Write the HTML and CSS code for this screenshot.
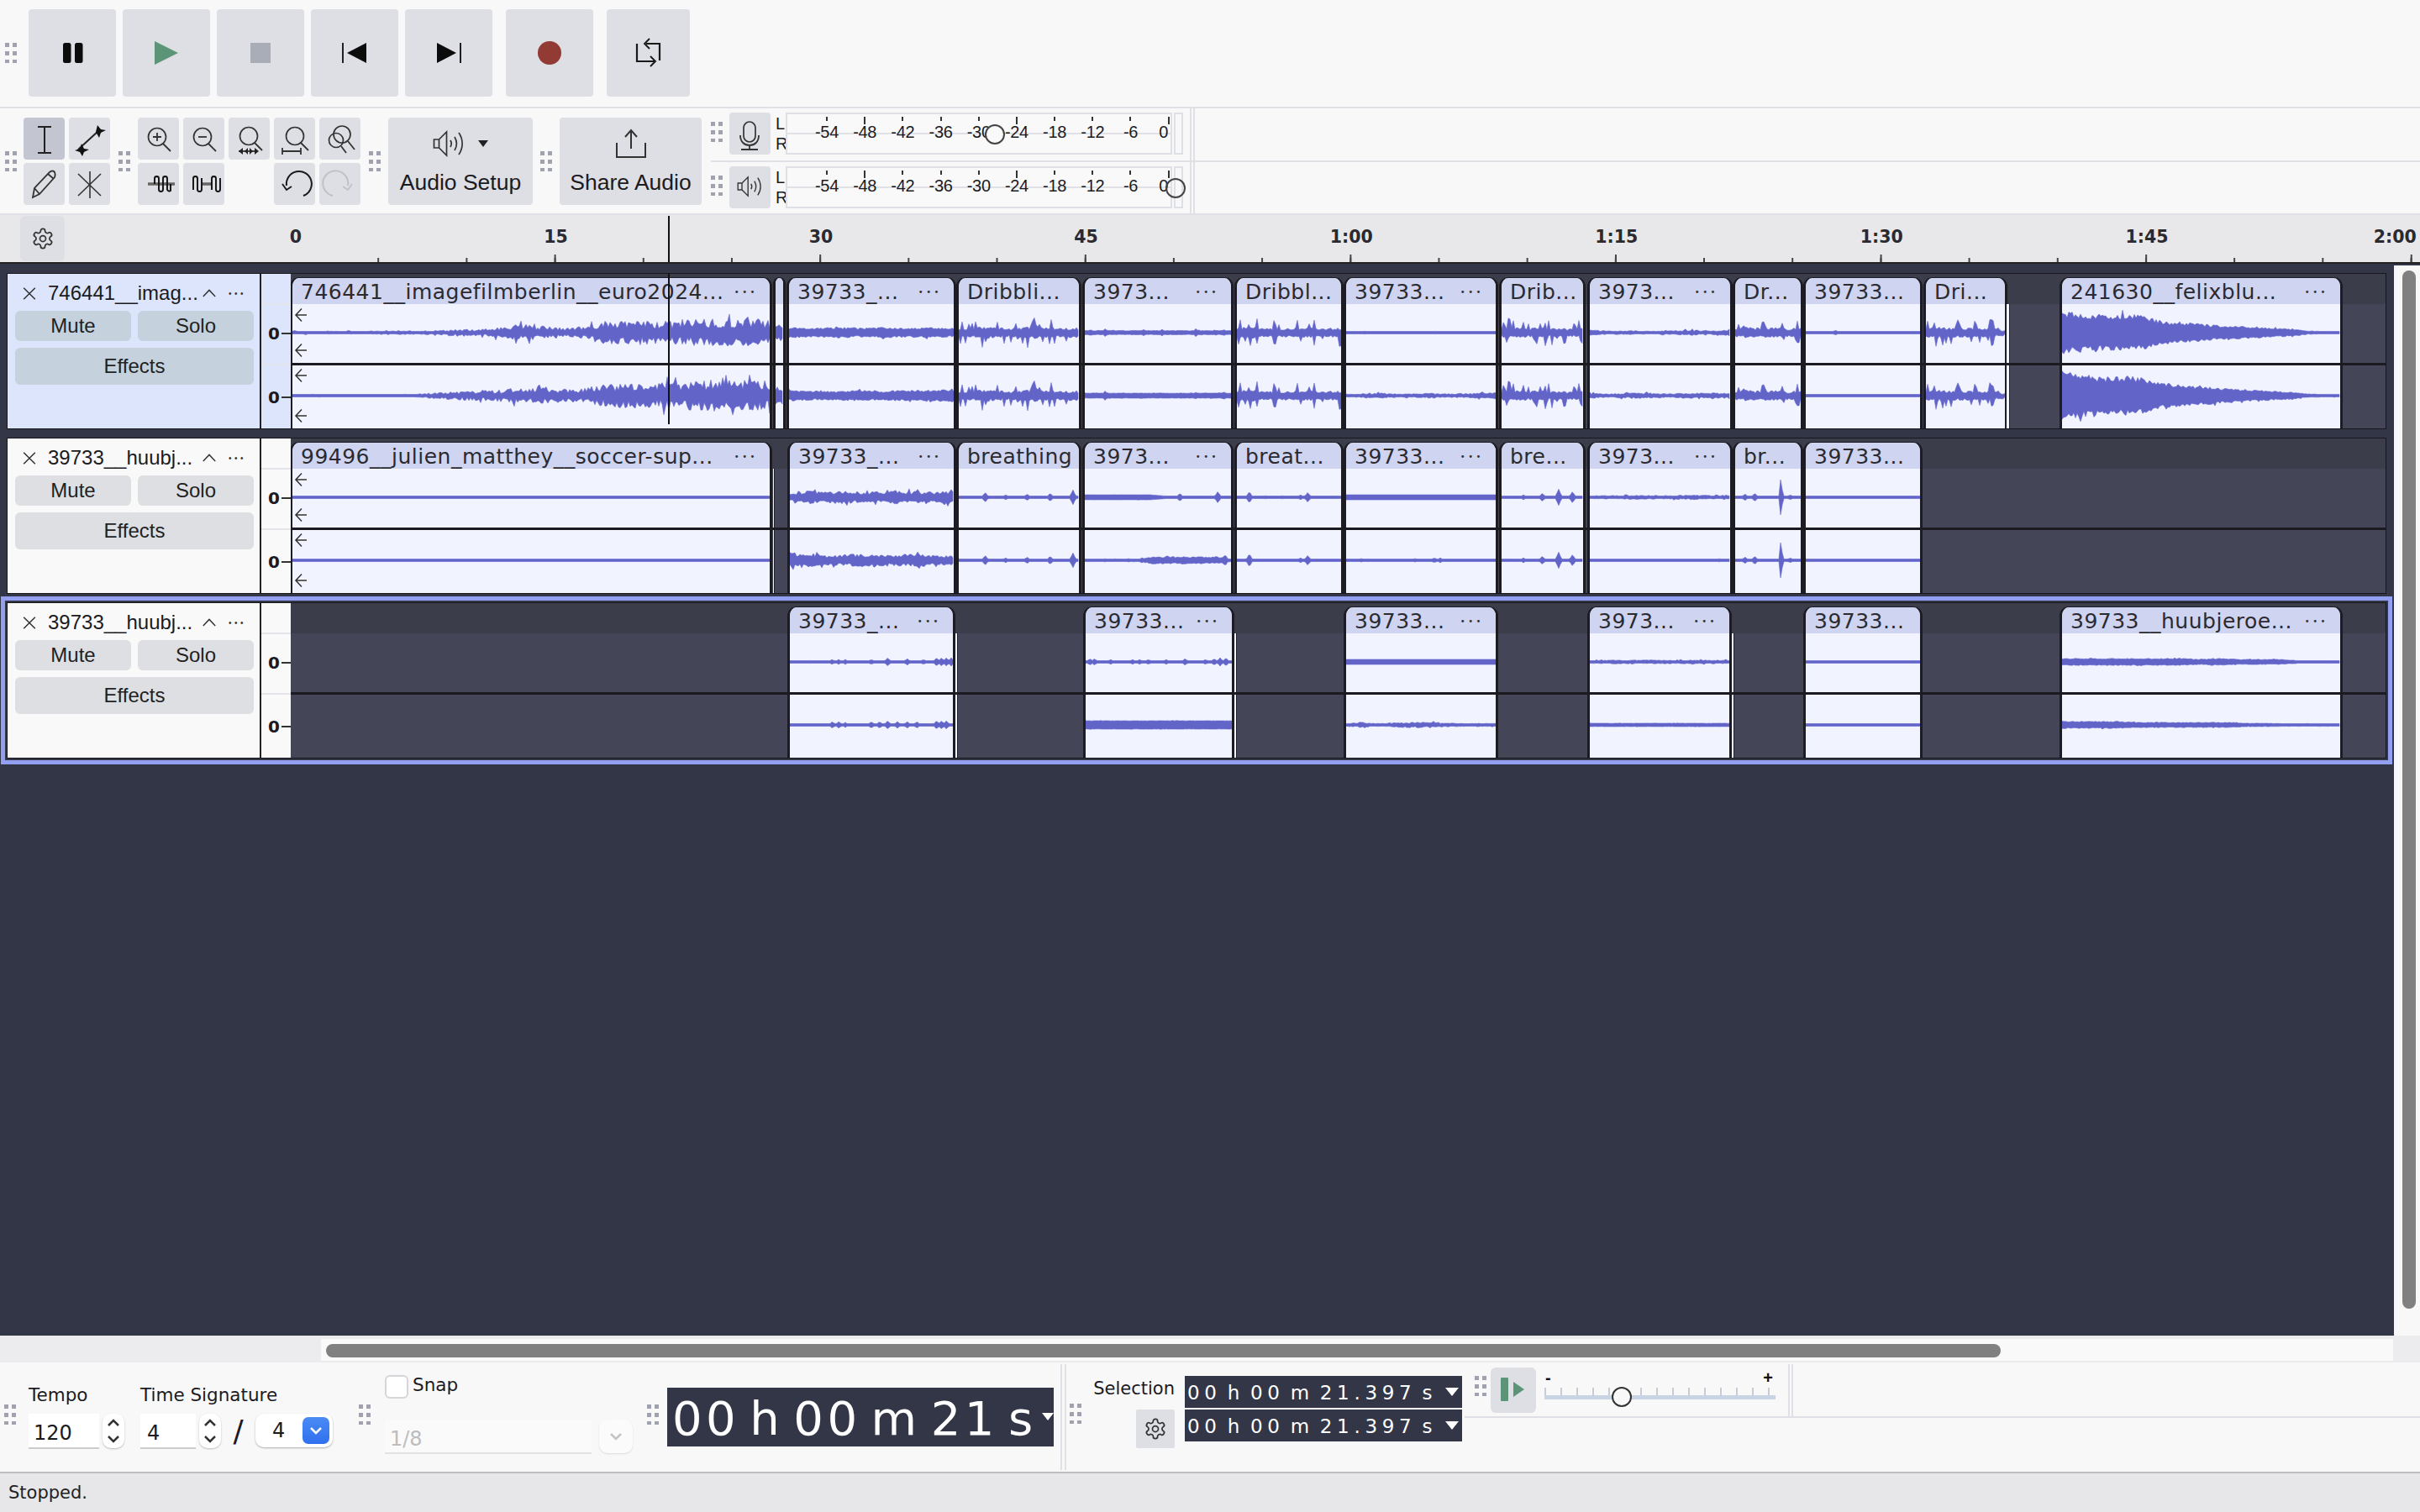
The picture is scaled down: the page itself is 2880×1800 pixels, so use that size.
FILE: index.html
```html
<!DOCTYPE html>
<html lang="en">
<head>
<meta charset="utf-8">
<title>Audacity</title>
<link rel="stylesheet" href="styles.css">
</head>
<body>
<svg class="defs" width="0" height="0">
  <symbol id="gear" viewBox="0 0 24 24"><path d="M12.22 2h-.44a2 2 0 0 0-2 2v.18a2 2 0 0 1-1 1.73l-.43.25a2 2 0 0 1-2 0l-.15-.08a2 2 0 0 0-2.73.73l-.22.38a2 2 0 0 0 .73 2.73l.15.1a2 2 0 0 1 1 1.72v.51a2 2 0 0 1-1 1.74l-.15.09a2 2 0 0 0-.73 2.73l.22.38a2 2 0 0 0 2.73.73l.15-.08a2 2 0 0 1 2 0l.43.25a2 2 0 0 1 1 1.73V20a2 2 0 0 0 2 2h.44a2 2 0 0 0 2-2v-.18a2 2 0 0 1 1-1.73l.43-.25a2 2 0 0 1 2 0l.15.08a2 2 0 0 0 2.73-.73l.22-.39a2 2 0 0 0-.73-2.73l-.15-.08a2 2 0 0 1-1-1.74v-.5a2 2 0 0 1 1-1.74l.15-.09a2 2 0 0 0 .73-2.73l-.22-.38a2 2 0 0 0-2.73-.73l-.15.08a2 2 0 0 1-2 0l-.43-.25a2 2 0 0 1-1-1.73V4a2 2 0 0 0-2-2z" fill="none" stroke="#333" stroke-width="1.5"/><circle cx="12" cy="12" r="3" fill="none" stroke="#333" stroke-width="1.5"/></symbol>
  <symbol id="close" viewBox="0 0 20 20"><path d="M2 2l16 16M18 2L2 18" stroke="#333" stroke-width="1.8" fill="none"/></symbol>
  <symbol id="chev" viewBox="0 0 20 12"><path d="M2 10.5L10 2l8 8.5" stroke="#333" stroke-width="1.6" fill="none"/></symbol>
  <symbol id="arrow" viewBox="0 0 16 18"><path d="M15 9H2M9 1.5L2 9l7 7.5" stroke="#333" stroke-width="1.5" fill="none"/></symbol>
  <symbol id="speaker" viewBox="0 0 40 32"><path d="M1.500 11h6l9-9v28l-9-9h-6zM7.500 11v10" fill="none" stroke="#333" stroke-width="1.700"/><path d="M21 12c1.500 2.500 1.500 5.500 0 8M26 8c3 5 3 11 0 16M31 3c5.500 8 5.500 18 0 26" fill="none" stroke="#333" stroke-width="1.700"/></symbol>
  <symbol id="up" viewBox="0 0 16 10"><path d="M2 8l6-6 6 6" fill="none" stroke="#333" stroke-width="2.500"/></symbol>
  <symbol id="down" viewBox="0 0 16 10"><path d="M2 2l6 6 6-6" fill="none" stroke="#333" stroke-width="2.500"/></symbol>
</svg>

<div class="app">
  <header class="transport">
    <span class="grip grip-transport"></span>
    <button class="tbtn"><svg width="104" height="104" viewBox="0 0 104 104"><rect x="41" y="40" width="9.500" height="24" rx="2.500" fill="#0c0c0c"/><rect x="55" y="40" width="9.500" height="24" rx="2.500" fill="#0c0c0c"/></svg></button>
    <button class="tbtn"><svg width="104" height="104" viewBox="0 0 104 104"><path d="M38 38l28 14-28 14z" fill="#5b9476"/></svg></button>
    <button class="tbtn"><svg width="104" height="104" viewBox="0 0 104 104"><rect x="40" y="40" width="24" height="24" fill="#a9adb7"/></svg></button>
    <button class="tbtn"><svg width="104" height="104" viewBox="0 0 104 104"><path d="M38 40v24" stroke="#0c0c0c" stroke-width="1.800"/><path d="M66 40v24L43 52z" fill="#0c0c0c"/></svg></button>
    <button class="tbtn"><svg width="104" height="104" viewBox="0 0 104 104"><path d="M66 40v24" stroke="#0c0c0c" stroke-width="1.800"/><path d="M38 40v24l23-12z" fill="#0c0c0c"/></svg></button>
    <button class="tbtn tbtn-rec"><svg width="104" height="104" viewBox="0 0 104 104"><circle cx="52" cy="52" r="14" fill="#923a34"/></svg></button>
    <button class="tbtn tbtn-loop"><svg width="99" height="104" viewBox="0 0 99 104"><path d="M47 41h16v20M36 41v21h22" fill="none" stroke="#1a1a1a" stroke-width="2.200"/><path d="M51 35l-6 6 6 6M52 56l6 6-6 6" fill="none" stroke="#1a1a1a" stroke-width="1.900"/></svg></button>
  </header>

  <section class="tools">
    <span class="grip grip-a"></span>
    <div class="icon-grid tool-grid">
      <button class="ibtn ibtn-on"><svg width="49" height="50" viewBox="0 0 49 50"><path d="M17 11h16M17 42h16M25 11v31" fill="none" stroke="#222" stroke-width="2"/></svg></button>
      <button class="ibtn"><svg width="49" height="50" viewBox="0 0 49 50"><path d="M11 38L35 16" stroke="#222" stroke-width="2"/><path d="M34 9l4 5 6 1-6 3-2 6-4-7zM15 31l3 6 6 1-6 3-2 5-3-5-6-2 6-2z" fill="#111"/></svg></button>
      <button class="ibtn"><svg width="49" height="50" viewBox="0 0 49 50"><path d="M11 41l2-11L31 11c2-2 5-2 6 0s1 4 0 6L19 37z M13 30l6 7M29 13l7 6" fill="none" stroke="#333" stroke-width="1.800"/></svg></button>
      <button class="ibtn"><svg width="49" height="50" viewBox="0 0 49 50"><path d="M25 10v32M11 13l27 26M38 13L11 39" fill="none" stroke="#333" stroke-width="1.600"/></svg></button>
    </div>
    <span class="grip grip-b"></span>
    <div class="icon-grid zoom-grid">
      <button class="ibtn"><svg width="49" height="50" viewBox="0 0 49 50"><circle cx="23" cy="23" r="10.500" fill="none" stroke="#333" stroke-width="1.700"/><path d="M30 31l9 9" stroke="#333" stroke-width="1.800"/><path d="M18 23h10M23 18v10" stroke="#333" stroke-width="1.800"/></svg></button>
      <button class="ibtn"><svg width="49" height="50" viewBox="0 0 49 50"><circle cx="23" cy="23" r="10.500" fill="none" stroke="#333" stroke-width="1.700"/><path d="M30 31l9 9" stroke="#333" stroke-width="1.800"/><path d="M18 23h10" stroke="#333" stroke-width="1.800"/></svg></button>
      <button class="ibtn"><svg width="49" height="50" viewBox="0 0 49 50"><circle cx="24" cy="22" r="10.500" fill="none" stroke="#333" stroke-width="1.700"/><path d="M31 30l9 9" stroke="#333" stroke-width="1.800"/><path d="M12 40h22" stroke="#333" stroke-width="1.800"/><path d="M17 36l-5 4 5 4zM23 36l-4 4 4 4zM25 36l4 4-4 4zM31 36l5 4-5 4z" fill="#222"/></svg></button>
      <button class="ibtn"><svg width="49" height="50" viewBox="0 0 49 50"><circle cx="25" cy="22" r="10.500" fill="none" stroke="#333" stroke-width="1.700"/><path d="M32 30l9 9" stroke="#333" stroke-width="1.800"/><path d="M10 36v8M32 36v8M10 40h22" stroke="#333" stroke-width="1.800"/></svg></button>
      <button class="ibtn"><svg width="49" height="50" viewBox="0 0 49 50"><circle cx="27" cy="20" r="10" fill="none" stroke="#333" stroke-width="1.700"/><circle cx="20" cy="27" r="8.500" fill="none" stroke="#333" stroke-width="1.700"/><path d="M34 28l8 10M26 34l6 8" stroke="#333" stroke-width="1.800"/></svg></button>
      <button class="ibtn"><svg width="49" height="50" viewBox="0 0 49 50"><path d="M12 25h32" stroke="#666" stroke-width="3.500"/><path d="M20 25V18.500a2.500 2.500 0 0 1 5 0v13a2.500 2.500 0 0 0 5 0v-13a2.500 2.500 0 0 1 5 0v13a2.500 2.500 0 0 0 4 1.500V25" fill="none" stroke="#111" stroke-width="1.900"/></svg></button>
      <button class="ibtn"><svg width="49" height="50" viewBox="0 0 49 50"><path d="M22 25h12" stroke="#666" stroke-width="3.500"/><path d="M12 32V18.500a2.500 2.500 0 0 1 5 0v13a2.500 2.500 0 0 0 5 0V18M34 32V18.500a2.500 2.500 0 0 1 5 0v13a2.500 2.500 0 0 0 5 0V18" fill="none" stroke="#111" stroke-width="1.900"/></svg></button>
      <span class="ibtn-gap"></span>
      <button class="ibtn"><svg width="49" height="50" viewBox="0 0 49 50"><path d="M35 39A15 15 0 1 0 15 27" fill="none" stroke="#1a1a1a" stroke-width="2"/><path d="M10 25l5 7 6-4" fill="none" stroke="#1a1a1a" stroke-width="1.900"/></svg></button>
      <button class="ibtn"><svg width="49" height="50" viewBox="0 0 49 50"><path d="M16 39A15 15 0 1 1 34 27" fill="none" stroke="#bfc1c8" stroke-width="2"/><path d="M39 25l-5 7-6-4" fill="none" stroke="#bfc1c8" stroke-width="1.900"/></svg></button>
    </div>
    <span class="grip grip-c"></span>
    <button class="wide-btn">
      <span class="wide-icon"><svg width="40" height="32"><use href="#speaker"/></svg><i class="mini-caret"></i></span>
      <span>Audio Setup</span>
    </button>
    <span class="grip grip-d"></span>
    <button class="wide-btn share-btn">
      <span class="wide-icon"><svg width="38" height="36" viewBox="0 0 38 36"><path d="M19 24V3M12 10l7-8 7 8" fill="none" stroke="#333" stroke-width="2"/><path d="M2 17v17h34V17" fill="none" stroke="#333" stroke-width="2"/></svg></span>
      <span>Share Audio</span>
    </button>
    <div class="meters">
      <div class="meter-row">
        <span class="grip grip-m"></span>
        <button class="mbtn"><svg width="49" height="50" viewBox="0 0 49 50"><rect x="17" y="11" width="14" height="24" rx="7" fill="none" stroke="#333" stroke-width="1.700"/><path d="M13 27c0 8 5 12 11 12s11-4 11-12M24 39v4M14 44h20" fill="none" stroke="#333" stroke-width="1.800"/></svg></button>
        <div class="lr"><span>L</span><span>R</span></div>
        <div class="meter">
          <div class="scale">
            <span class="mark">-54</span><span class="mark mark-major">-48</span><span class="mark">-42</span><span class="mark">-36</span><span class="mark">-30</span><span class="mark mark-major">-24</span><span class="mark">-18</span><span class="mark">-12</span><span class="mark">-6</span><span class="mark mark-major mark-zero">0</span>
          </div>
          <i class="knob knob-in"></i>
        </div>
        <div class="slot"></div>
        <div class="meter-end"></div>
      </div>
      <div class="meter-row">
        <span class="grip grip-m"></span>
        <button class="mbtn"><svg width="49" height="50" viewBox="0 0 49 50"><use href="#speaker" x="9" y="11" width="32" height="26"/></svg></button>
        <div class="lr"><span>L</span><span>R</span></div>
        <div class="meter">
          <div class="scale">
            <span class="mark">-54</span><span class="mark mark-major">-48</span><span class="mark">-42</span><span class="mark">-36</span><span class="mark">-30</span><span class="mark mark-major">-24</span><span class="mark">-18</span><span class="mark">-12</span><span class="mark">-6</span><span class="mark mark-major mark-zero">0</span>
          </div>
          <i class="knob knob-out"></i>
        </div>
        <div class="slot"></div>
        <div class="meter-end"></div>
      </div>
    </div>
  </section>

  <section class="ruler">
    <button class="ruler-gear"><svg width="28" height="28"><use href="#gear"/></svg></button>
    <div class="ruler-scale">
      <span class="rlabel rlabel-zero">0</span><span class="rlabel">15</span><span class="rlabel">30</span><span class="rlabel">45</span><span class="rlabel">1:00</span><span class="rlabel">1:15</span><span class="rlabel">1:30</span><span class="rlabel">1:45</span><span class="rlabel rlabel-end">2:00</span>
    </div>
    <i class="ruler-minor"></i><i class="ruler-major"></i><i class="ruler-head"></i>
  </section>

  <main class="workspace">
    <div class="tracks">

      <article class="track track-focus">
        <div class="panel">
          <div class="panel-head"><svg class="x" width="20" height="17"><use href="#close"/></svg><span class="tname">746441__imag...</span><svg class="cv" width="18" height="12"><use href="#chev"/></svg><span class="pmore">•••</span></div>
          <div class="pbtns"><button class="pbtn">Mute</button><button class="pbtn">Solo</button><button class="pbtn pbtn-wide">Effects</button></div>
        </div>
        <div class="vruler"><span class="vz">0</span><span class="vz vz2">0</span></div>
        <div class="lane">
          <div class="clip" style="left:0;width:572px"><div class="head"><span class="name">746441__imagefilmberlin__euro2024...</span><span class="more">•••</span></div>
            <div class="wave" data-env="1.5,1.5,1.5,1.5,2,2,4,4,8,7,5,11,13,12,13,14,14,13" data-seed="11" data-v="0.6"></div><div class="wave wave2" data-env="1,1,1,1,1,3,5,5,8,8,6,11,13,13,15,16,16,15" data-seed="12" data-v="0.6"></div>
            <svg class="ar ar1" width="16" height="18"><use href="#arrow"/></svg><svg class="ar ar2" width="16" height="18"><use href="#arrow"/></svg><svg class="ar ar3" width="16" height="18"><use href="#arrow"/></svg><svg class="ar ar4" width="16" height="18"><use href="#arrow"/></svg>
          </div>
          <div class="clip" style="left:575px;width:13px"><div class="head"></div><div class="wave" data-env="8,9" data-seed="13"></div><div class="wave wave2" data-env="9,10" data-seed="14"></div></div>
          <div class="clip" style="left:591px;width:200px"><div class="head"><span class="name">39733_...</span><span class="more">•••</span></div><div class="wave" data-env="6,5,6,5,6,5,6,5" data-seed="15" data-v="0.3"></div><div class="wave wave2" data-env="6,5,5,6,5,6,6,7" data-seed="16" data-v="0.3"></div></div>
          <div class="clip" style="left:793px;width:147px"><div class="head"><span class="name">Dribbli...</span></div><div class="wave" data-env="12,17,15,12,16,18,13,14" data-seed="17" data-v="0.8"></div><div class="wave wave2" data-env="12,17,15,12,16,18,13,14" data-seed="17" data-v="0.8"></div></div>
          <div class="clip" style="left:943px;width:178px"><div class="head"><span class="name">3973...</span><span class="more">•••</span></div><div class="wave" data-env="2.5,2.5" data-seed="19" data-v="0.2" data-blips="4:4,14:5,40:4,53:4,66:3,76:5,95:4"></div><div class="wave wave2" data-env="3,3" data-seed="20" data-v="0.1" data-blips="14:6,50:4,66:4,76:4,95:5"></div></div>
          <div class="clip" style="left:1124px;width:128px"><div class="head"><span class="name">Dribbl...</span></div><div class="wave" data-env="13,17,13,12,16,14,12,15" data-seed="21" data-v="0.8"></div><div class="wave wave2" data-env="13,17,13,12,16,14,12,15" data-seed="21" data-v="0.8"></div></div>
          <div class="clip" style="left:1254px;width:182px"><div class="head"><span class="name">39733...</span><span class="more">•••</span></div><div class="wave" data-env="1.5,1.5" data-seed="23" data-v="0" data-blips="12:2,60:2"></div><div class="wave wave2" data-env="1.5,2,3,2,2,3,2,2,3,3" data-seed="24"></div></div>
          <div class="clip" style="left:1439px;width:101px"><div class="head"><span class="name">Drib...</span></div><div class="wave" data-env="14,17,12,15,13,11,15" data-seed="25" data-v="0.8"></div><div class="wave wave2" data-env="14,17,12,15,13,11,15" data-seed="25" data-v="0.8"></div></div>
          <div class="clip" style="left:1544px;width:171px"><div class="head"><span class="name">3973...</span><span class="more">•••</span></div><div class="wave" data-env="3,2,2,1.5,2,3,2,3" data-seed="27"></div><div class="wave wave2" data-env="3,2,3,3,2,3,3,3" data-seed="28"></div></div>
          <div class="clip" style="left:1717px;width:82px"><div class="head"><span class="name">Dr...</span></div><div class="wave" data-env="14,15,13,15,12,14" data-seed="29" data-v="0.8"></div><div class="wave wave2" data-env="14,15,13,15,12,14" data-seed="29" data-v="0.8"></div></div>
          <div class="clip" style="left:1801px;width:140px"><div class="head"><span class="name">39733...</span></div><div class="wave" data-env="1.5,1.5" data-seed="31" data-v="0" data-blips="26:3"></div><div class="wave wave2" data-env="1.5,1.5" data-seed="32" data-v="0"></div></div>
          <div class="clip" style="left:1944px;width:98px"><div class="head"><span class="name">Dri...</span></div><div class="wave" data-env="14,17,13,14,13,14,14,3" data-seed="33" data-v="0.8" data-blips="84:30"></div><div class="wave wave2" data-env="14,17,13,14,13,14,14,3" data-seed="33" data-v="0.8" data-blips="84:24"></div></div>
          <div class="sliver" style="left:2042px;width:4px"></div>
          <div class="clip" style="left:2106px;width:335px"><div class="head"><span class="name">241630__felixblu...</span><span class="more">•••</span></div><div class="wave" data-env="24,22,20,20,21,19,13,11,11,9,8,7,6,5,4,2,1.5,1.5" data-seed="35" data-v="0.25"></div><div class="wave wave2" data-env="26,25,22,21,22,20,14,13,11,10,8,7,6,5,4,2,1.5,1.5" data-seed="36" data-v="0.25"></div></div>
          <i class="playhead"></i>
        </div>
      </article>

      <article class="track">
        <div class="panel">
          <div class="panel-head"><svg class="x" width="20" height="17"><use href="#close"/></svg><span class="tname">39733__huubj...</span><svg class="cv" width="18" height="12"><use href="#chev"/></svg><span class="pmore">•••</span></div>
          <div class="pbtns"><button class="pbtn">Mute</button><button class="pbtn">Solo</button><button class="pbtn pbtn-wide">Effects</button></div>
        </div>
        <div class="vruler"><span class="vz">0</span><span class="vz vz2">0</span></div>
        <div class="lane">
          <div class="clip" style="left:0;width:572px"><div class="head"><span class="name">99496__julien_matthey__soccer-sup...</span><span class="more">•••</span></div>
            <div class="wave" data-env="1.5,1.5" data-seed="41" data-v="0"></div><div class="wave wave2" data-env="1.5,1.5" data-seed="42" data-v="0"></div>
            <svg class="ar ar1" width="16" height="18"><use href="#arrow"/></svg><svg class="ar ar2" width="16" height="18"><use href="#arrow"/></svg><svg class="ar ar3" width="16" height="18"><use href="#arrow"/></svg><svg class="ar ar4" width="16" height="18"><use href="#arrow"/></svg>
          </div>
          <div class="sliver" style="left:574px;width:2px"></div>
          <div class="clip" style="left:592px;width:199px"><div class="head"><span class="name">39733_...</span><span class="more">•••</span></div><div class="wave" data-env="4,7,6,7,6,6,7,6,6,7" data-seed="43"></div><div class="wave wave2" data-env="8,8,5,6,7,6,6,7,5,5" data-seed="44"></div></div>
          <div class="clip" style="left:793px;width:147px"><div class="head"><span class="name">breathing</span></div><div class="wave" data-env="1.5,1.5" data-seed="45" data-v="0" data-blips="22:6,39:3,57:4,76:5,95:9"></div><div class="wave wave2" data-env="1.5,1.5" data-seed="45" data-v="0" data-blips="22:6,39:3,57:4,76:5,95:9"></div></div>
          <div class="clip" style="left:943px;width:178px"><div class="head"><span class="name">3973...</span><span class="more">•••</span></div><div class="wave" data-env="3,3,3,3,3,1.5,1.5,1.5,1.5,1.5" data-seed="47" data-v="0.05" data-blips="65:5,91:7"></div><div class="wave wave2" data-env="1.5,1.5,1.5,1.5,1.5,4,4,4,4,4,4,1.5" data-seed="48" data-v="0.3" data-blips="14:2,30:2,39:3,96:7"></div></div>
          <div class="clip" style="left:1124px;width:128px"><div class="head"><span class="name">breat...</span></div><div class="wave" data-env="1.5,1.5" data-seed="49" data-v="0" data-blips="12:7,27:2,44:2,61:3,68:6"></div><div class="wave wave2" data-env="1.5,1.5" data-seed="49" data-v="0" data-blips="12:8,61:3,68:6"></div></div>
          <div class="clip" style="left:1254px;width:182px"><div class="head"><span class="name">39733...</span><span class="more">•••</span></div><div class="wave" data-env="3,3" data-seed="51" data-v="0"></div><div class="wave wave2" data-env="1.5,1.5" data-seed="52" data-v="0" data-blips="10:2,15:2,46:2,59:3,63:3"></div></div>
          <div class="clip" style="left:1439px;width:101px"><div class="head"><span class="name">bre...</span></div><div class="wave" data-env="1.5,1.5" data-seed="53" data-v="0" data-blips="7:2,27:3,50:5,70:10,87:7"></div><div class="wave wave2" data-env="1.5,1.5" data-seed="53" data-v="0" data-blips="7:2,27:3,50:5,70:10,87:7"></div></div>
          <div class="clip" style="left:1544px;width:171px"><div class="head"><span class="name">3973...</span><span class="more">•••</span></div><div class="wave" data-env="1.5,2,2,2,2,2.5,2,2.5" data-seed="55"></div><div class="wave wave2" data-env="1.5,1.5" data-seed="56" data-v="0" data-blips="92:2"></div></div>
          <div class="clip" style="left:1717px;width:82px"><div class="head"><span class="name">br...</span></div><div class="wave" data-env="1.5,1.5" data-seed="57" data-v="0" data-blips="15:4,30:5,70:30,84:3"></div><div class="wave wave2" data-env="1.5,1.5" data-seed="57" data-v="0" data-blips="15:4,30:5,70:30,84:3"></div></div>
          <div class="clip" style="left:1801px;width:140px"><div class="head"><span class="name">39733...</span></div><div class="wave" data-env="1.5,1.5" data-seed="59" data-v="0"></div><div class="wave wave2" data-env="1.5,1.5" data-seed="60" data-v="0"></div></div>
        </div>
      </article>

      <article class="track track-selected">
        <div class="panel">
          <div class="panel-head"><svg class="x" width="20" height="17"><use href="#close"/></svg><span class="tname">39733__huubj...</span><svg class="cv" width="18" height="12"><use href="#chev"/></svg><span class="pmore">•••</span></div>
          <div class="pbtns"><button class="pbtn">Mute</button><button class="pbtn">Solo</button><button class="pbtn pbtn-wide">Effects</button></div>
        </div>
        <div class="vruler"><span class="vz">0</span><span class="vz vz2">0</span></div>
        <div class="lane">
          <div class="clip" style="left:592px;width:198px"><div class="head"><span class="name">39733_...</span><span class="more">•••</span></div><div class="wave" data-env="1.5,1.5" data-seed="61" data-v="0" data-blips="12:2,26:3,30:3,34:3,50:3,60:5,72:4,82:3,90:5,93:5,96:5,99:5"></div><div class="wave wave2" data-env="1.5,1.5" data-seed="62" data-v="0" data-blips="26:4,30:4,34:3,50:4,55:4,60:5,66:4,72:4,78:4,90:5,93:5,96:5"></div></div>
          <div class="sliver" style="left:791px;width:3px"></div>
          <div class="clip" style="left:944px;width:178px"><div class="head"><span class="name">39733...</span><span class="more">•••</span></div><div class="wave" data-env="1.5,1.5" data-seed="63" data-v="0" data-blips="3:4,6:4,17:3,32:3,37:3,43:3,55:3,68:4,82:3,88:4,92:5,96:5"></div><div class="wave wave2" data-env="5,5" data-seed="64" data-v="0.05"></div></div>
          <div class="sliver" style="left:1123px;width:3px"></div>
          <div class="clip" style="left:1254px;width:182px"><div class="head"><span class="name">39733...</span><span class="more">•••</span></div><div class="wave" data-env="3,3" data-seed="65" data-v="0"></div><div class="wave wave2" data-env="1.5,3,1.5,2,3,3,3,2,1.5,2,1.5" data-seed="66"></div></div>
          <div class="clip" style="left:1544px;width:170px"><div class="head"><span class="name">3973...</span><span class="more">•••</span></div><div class="wave" data-env="1.5,2,2,2,2,2,2,2,2" data-seed="67"></div><div class="wave wave2" data-env="2,2,2,2,2,2,2,2,2" data-seed="68" data-v="0.1"></div></div>
          <div class="sliver" style="left:1715px;width:3px"></div>
          <div class="clip" style="left:1801px;width:140px"><div class="head"><span class="name">39733...</span></div><div class="wave" data-env="1.5,1.5" data-seed="69" data-v="0"></div><div class="wave wave2" data-env="1.5,1.5" data-seed="70" data-v="0"></div></div>
          <div class="clip" style="left:2106px;width:335px"><div class="head"><span class="name">39733__huubjeroe...</span><span class="more">•••</span></div><div class="wave" data-env="4,4,4,4,4,4,4,3,4,3,3,3,1.5,1.5,1.5" data-seed="71" data-v="0.2"></div><div class="wave wave2" data-env="4,4,4,4,3,3,3,3,3,3,2,2,1.5,1.5,1.5,1.5" data-seed="72" data-v="0.2"></div></div>
        </div>
      </article>
    </div>
    <aside class="vscroll"><div class="vthumb"></div></aside>
  </main>

  <div class="hscroll"><div class="hgutter"></div><div class="htrack"><div class="hthumb"></div></div><div class="hcorner"></div></div>

  <footer class="bottom">
    <div class="bgroup bg-time">
      <span class="grip grip-e"></span>
      <div class="field field-tempo">
        <label class="blabel">Tempo</label>
        <div class="fline"><span class="num num-tempo">120</span><span class="spin"><svg width="16" height="10"><use href="#up"/></svg><svg width="16" height="10"><use href="#down"/></svg></span></div>
      </div>
      <div class="field">
        <label class="blabel">Time Signature</label>
        <div class="fline"><span class="num num-sig">4</span><span class="spin"><svg width="16" height="10"><use href="#up"/></svg><svg width="16" height="10"><use href="#down"/></svg></span><span class="slash">/</span><span class="sel4"><span class="sel4-v">4</span><span class="sel4-b"><svg width="16" height="10"><path d="M2 2l6 6 6-6" fill="none" stroke="#fff" stroke-width="2.500"/></svg></span></span></div>
      </div>
    </div>
    <div class="bgroup bg-snap">
      <span class="grip grip-e"></span>
      <div class="snap">
        <div class="snap-row"><span class="check"></span><span class="blabel">Snap</span></div>
        <div class="fline snap-line"><span class="snap-val">1/8</span><span class="snap-btn"><svg width="16" height="10"><path d="M2 2l6 6 6-6" fill="none" stroke="#c4c4c6" stroke-width="2.500"/></svg></span></div>
      </div>
    </div>
    <div class="bgroup bg-clock">
      <span class="grip grip-e"></span>
      <div class="clock"><span class="clock-t">00 h 00 m 21 s</span><i class="clock-caret"></i></div>
      <i class="bsep"></i>
    </div>
    <div class="bgroup bg-sel">
      <span class="grip grip-e"></span>
      <div class="sel-col">
        <span class="blabel">Selection</span>
        <button class="sel-gear"><svg width="28" height="28"><use href="#gear"/></svg></button>
      </div>
      <div class="sel-boxes">
        <div class="sel-box"><span class="sel-t">00 h 00 m 21.397 s</span><i class="sel-caret"></i></div>
        <div class="sel-box"><span class="sel-t">00 h 00 m 21.397 s</span><i class="sel-caret"></i></div>
      </div>
    </div>
    <div class="bg-speed">
      <span class="grip grip-s"></span>
      <button class="speed-btn"><svg width="54" height="54" viewBox="0 0 54 54"><rect x="12" y="12" width="9" height="28" rx="1" fill="#5b9476"/><path d="M27 17l13 9-13 9z" fill="#5b9476"/></svg></button>
      <div class="slider"><span class="sl-m">-</span><span class="sl-p">+</span><i class="sl-ticks"></i><i class="sl-track"></i><i class="sl-knob"></i></div>
      <i class="bsep bsep-s"></i>
    </div>
  </footer>

  <div class="status">Stopped.</div>
</div>
<script src="script.js"></script>
</body>
</html>
```
FILE: styles.css
```css
* { box-sizing: border-box; }
html, body { margin: 0; padding: 0; }
body { width: 2880px; height: 1800px; overflow: hidden; font-family: "Liberation Sans", Arial, sans-serif; color: #1b1b1f; background: #f8f8f9; }
button { font: inherit; color: inherit; border: 0; padding: 0; margin: 0; background: #dedfe4; border-radius: 4px; }
svg { display: block; }
.defs { position: absolute; }
.app { display: flex; flex-direction: column; width: 2880px; height: 1800px; }

.grip { display: block; flex: none; width: 14px; height: 24px; background-image: conic-gradient(#a0a2b0 25%, transparent 0); background-size: 9px 10px; background-position: -4px 0; }

/* transport */
.transport { display: flex; align-items: center; height: 129px; padding: 8px 0 10px 6px; border-bottom: 2px solid #e0e1e6; flex: none; }
.grip-transport { margin-right: 14px; }
.tbtn { width: 104px; height: 104px; margin-right: 8px; flex: none; }
.tbtn-rec { margin-left: 8px; margin-right: 8px; }
.tbtn-loop { width: 99px; margin-left: 8px; }

/* tools */
.tools { display: flex; align-items: center; height: 127px; padding-left: 6px; flex: none; border-bottom: 2px solid #e0e1e6; }
.icon-grid { display: grid; grid-template-columns: repeat(auto-fill, 49px); grid-template-rows: 50px 50px; gap: 4px 5px; flex: none; }
.tool-grid { width: 103px; margin-left: 8px; }
.zoom-grid { width: 265px; margin-left: 9px; }
.ibtn { width: 49px; height: 50px; }
.ibtn-on { background: #c3c6d1; }
.grip-b { margin-left: 10px; }
.grip-c { margin-left: 10px; }
.grip-d { margin-left: 9px; }
.wide-btn { display: flex; flex-direction: column; align-items: center; width: 172px; height: 104px; margin-left: 9px; flex: none; font-size: 26.5px; line-height: 30px; padding-top: 14px; gap: 14px; }
.share-btn { width: 169px; }
.wide-icon { display: flex; align-items: center; height: 34px; gap: 14px; }
.mini-caret { display: block; width: 0; height: 0; border-left: 6px solid transparent; border-right: 6px solid transparent; border-top: 8px solid #222; }
.meters { display: flex; flex-direction: column; flex: 1; align-self: stretch; margin-left: 11px; }
.meter-row { display: flex; align-items: flex-start; flex: 1; padding-top: 5px; position: relative; }
.meter-row + .meter-row { border-top: 2px solid #e0e1e6; }
.grip-m { margin: 11px 8px 0 0; }
.mbtn { width: 49px; height: 50px; flex: none; }
.lr { display: flex; flex-direction: column; width: 12px; margin-left: 6px; font-size: 20px; line-height: 24px; padding-top: 1px; flex: none; }
.meter { position: relative; width: 460px; height: 50px; flex: none; border: 2px solid #dfe0e5; background: #f9f9fa; }
.meter::before { content: ""; position: absolute; left: 0; right: 0; top: 22px; height: 2px; background: #e0e1e5; }
.scale { position: relative; display: flex; padding-left: 24.4px; height: 100%; }
.mark { position: relative; width: 45.2px; flex: none; text-align: center; font-size: 20px; line-height: 20px; padding-top: 11px; letter-spacing: -0.3px; }
.mark::before { content: ""; position: absolute; left: 50%; top: 3px; width: 2px; margin-left: -1px; height: 5px; background: #333; }
.mark-major::before { height: 9px; }
.mark-zero { text-indent: -12px; }
.knob { position: absolute; width: 24px; height: 24px; border: 2px solid #444; border-radius: 50%; background: #f9f9fa; top: 12px; }
.knob-in { left: 235px; }
.knob-out { left: 450px; background: transparent; z-index: 2; }
.slot { width: 11px; height: 50px; margin-left: 2px; border: 2px solid #dfe0e5; flex: none; }
.meter-end { width: 6px; align-self: stretch; margin: -5px 0 0 8px; border-left: 2px solid #e0e1e6; border-right: 2px solid #e0e1e6; flex: none; }

/* ruler */
.ruler { position: relative; display: flex; align-items: flex-start; height: 58px; background: #e8e8ea; flex: none; border-bottom: 2px solid #222; }
.ruler-gear { width: 53px; height: 54px; margin: 1px 0 0 24px; display: flex; align-items: center; justify-content: center; flex: none; border-radius: 6px; }
.ruler-scale { display: flex; margin-left: 111px; height: 50px; flex: none; }
.rlabel { width: 315.6px; flex: none; text-align: center; font: bold 20.5px/52px "DejaVu Sans", sans-serif; color: #2a2a30; }
.rlabel-zero { text-indent: 12px; }
.rlabel-end { width: 163px; text-align: right; }
.ruler-minor, .ruler-major { position: absolute; left: 346px; right: 0; bottom: 0; background-repeat: repeat-x; background-position: left bottom; }
.ruler-minor { height: 5px; background-image: linear-gradient(to left, #444 2px, transparent 2px); background-size: 105.2px 5px; }
.ruler-major { height: 9px; background-image: linear-gradient(to left, #444 2px, transparent 2px); background-size: 315.6px 9px; }
.ruler-head { position: absolute; left: 795px; top: 1px; bottom: 0; width: 2px; background: #111; }

/* workspace */
.workspace { display: flex; flex: 1; background: #333647; min-height: 0; }
.tracks { display: flex; flex-direction: column; gap: 12px; padding: 12px 0 0 9px; width: 2849px; flex: none; }
.track { display: flex; width: 2830px; height: 184px; flex: none; box-shadow: 0 0 0 1px #17171c; }
.track-selected { outline: 5px solid #939ff0; outline-offset: 3px; }
.panel { width: 302px; background: #f9f9f9; flex: none; padding: 0 7px 0 9px; border-right: 2px solid #222; }
.track-focus .panel { background: #dde5fd; }
.panel-head { display: flex; align-items: center; height: 44px; font-size: 24px; padding-top: 2px; }
.x { margin: 0 12px 0 7px; flex: none; }
.tname { width: 186px; flex: none; white-space: nowrap; overflow: hidden; }
.cv { flex: none; margin-left: -3px; }
.pmore { font-size: 10px; letter-spacing: 3.500px; margin-left: 14px; white-space: nowrap; color: #333; }
.pbtns { display: flex; flex-wrap: wrap; gap: 8px; }
.pbtn { width: 138px; height: 36px; font-size: 24px; line-height: 36px; border-radius: 6px; background: #dedfe3; color: #222; }
.pbtn-wide { width: 284px; height: 44px; line-height: 44px; }
.track-focus .pbtn { background: #c5d2de; }
.vruler { position: relative; width: 35px; background: #f9f9f9; flex: none; }
.track-focus .vruler { background: #dde5fd; }
.vruler::before { content: ""; position: absolute; left: 0; right: 0; top: 35px; height: 2px; background: #e4e4ea; }
.vruler::after { content: ""; position: absolute; left: 0; right: 0; top: 107px; height: 2px; background: #e4e4ea; }
.vz { position: absolute; left: 8px; top: 57px; font: bold 20px/28px "DejaVu Sans", sans-serif; }
.vz::after { content: ""; position: absolute; left: 16px; top: 13px; width: 11px; height: 2px; background: #333; }
.vz2 { top: 133px; }
.lane { position: relative; flex: 1; background: #444556; overflow: hidden; }
.lane::before { content: ""; position: absolute; left: 0; right: 0; top: 0; height: 36px; background: #3c3d4b; }
.lane::after { content: ""; position: absolute; left: 0; right: 0; top: 106px; height: 3px; background: #1a1a20; z-index: 3; }
.clip { position: absolute; top: 5px; bottom: 0; display: flex; flex-direction: column; border-left: 2px solid #1c1c22; border-right: 2px solid #1c1c22; border-radius: 10px 10px 0 0; background: #f1f3fe; overflow: hidden; box-shadow: 0 0 0 1px #1c1c22; }
.head { display: flex; align-items: center; justify-content: space-between; height: 31px; flex: none; padding: 2px 14px 0 10px; background: #cfd4f1; font: 25px/29px "DejaVu Sans", sans-serif; letter-spacing: .5px; color: #2a2a30; }
.name { white-space: nowrap; }
.more { font-size: 10px; letter-spacing: 3.500px; flex: none; color: #333; }
.wave { height: 72px; flex: none; position: relative; }
.wave2 { margin-top: 1px; flex: 1; }
.wave svg { position: absolute; left: 0; top: 0; }
.sliver { position: absolute; top: 36px; bottom: 0; background: #f1f3fe; border-right: 1px solid #222; }
.ar { position: absolute; left: 2px; }
.ar1 { top: 35px; }
.ar2 { top: 77px; }
.ar3 { top: 107px; }
.ar4 { top: 155px; }
.playhead { position: absolute; left: 449px; top: 0; width: 2px; height: 179px; background: #111; z-index: 4; }
.vscroll { flex: 1; background: #f8f8f9; margin-top: 2px; padding: 6px 5px 0 10px; }
.vthumb { width: 16px; height: 1236px; border-radius: 8px; background: #808080; }

/* horizontal scrollbar */
.hscroll { display: flex; height: 32px; flex: none; background: #ececee; }
.hgutter { width: 382px; flex: none; }
.htrack { width: 2466px; flex: none; background: #f9f9f9; margin-top: 4px; padding: 6px 0 0 6px; height: 26px; }
.hthumb { width: 1993px; height: 16px; border-radius: 8px; background: #808080; }
.hcorner { flex: 1; }

/* bottom */
.bottom { display: flex; height: 130px; flex: none; background: #f8f8f9; align-items: flex-start; }
.bgroup { display: flex; align-items: flex-start; height: 128px; flex: none; position: relative; }
.blabel { font: 21.5px/30px "DejaVu Sans", sans-serif; color: #1b1b1f; white-space: nowrap; }
.grip-e { margin-top: 50px; }
.bg-time { width: 427px; padding-left: 5px; }
.field { display: flex; flex-direction: column; gap: 7px; padding-top: 24px; }
.field-tempo { width: 133px; margin-left: 15px; }
.fline { display: flex; align-items: flex-start; }
.num { background: #fff; height: 42px; border-bottom: 2px solid #ccc; font: 24px/46px "DejaVu Sans", sans-serif; padding-left: 6px; flex: none; }
.num-tempo { width: 84px; }
.num-sig { width: 66px; padding-left: 8px; }
.spin { display: flex; flex-direction: column; align-items: center; justify-content: space-between; width: 26px; height: 41px; margin-left: 4px; padding: 6px 0; background: #fff; border-radius: 10px; box-shadow: 0 1px 2px rgba(0,0,0,.25); flex: none; }
.slash { font: 36px/42px "DejaVu Sans", sans-serif; width: 41px; text-align: center; flex: none; }
.sel4 { display: flex; align-items: center; justify-content: space-between; width: 92px; height: 40px; background: #fff; border-radius: 10px; box-shadow: 0 1px 2px rgba(0,0,0,.3); padding-right: 4px; flex: none; }
.sel4-v { font: 24px/42px "DejaVu Sans", sans-serif; padding-left: 20px; }
.sel4-b { display: flex; align-items: center; justify-content: center; width: 32px; height: 32px; border-radius: 7px; background: linear-gradient(#4a8bf5, #2f70ee); }
.bg-snap { width: 343px; }
.snap { width: 296px; padding-top: 15px; margin-left: 17px; }
.snap-row { display: flex; align-items: center; height: 28px; gap: 5px; }
.snap-row .blabel { position: relative; top: -2px; }
.check { width: 28px; height: 28px; background: #fff; border: 2px solid #d6d6da; border-radius: 6px; flex: none; }
.snap-line { margin-top: 25px; }
.snap-val { width: 246px; height: 41px; background: #fafafa; border-bottom: 2px solid #e2e2e4; color: #bdbdbf; font: 24px/46px "DejaVu Sans", sans-serif; padding-left: 6px; flex: none; }
.snap-btn { display: flex; align-items: center; justify-content: center; width: 40px; height: 40px; margin-left: 9px; background: #fbfbfb; border-radius: 10px; box-shadow: 0 1px 2px rgba(0,0,0,.12); flex: none; }
.bg-clock { width: 503px; }
.clock { position: relative; width: 460px; height: 70px; margin: 30px 0 0 10px; background: #333647; color: #fff; flex: none; padding-left: 6px; }
.clock-t { font: 56px/74px "DejaVu Sans", sans-serif; letter-spacing: 4.4px; word-spacing: -10px; white-space: nowrap; }
.clock-caret { position: absolute; right: 0; top: 30px; border-left: 7px solid transparent; border-right: 7px solid transparent; border-top: 9px solid #fff; }
.bsep { position: absolute; left: 492px; top: 2px; bottom: 0; width: 7px; border-left: 2px solid #e0e1e6; border-right: 2px solid #e0e1e6; }
.bg-sel { width: 470px; }
.bg-sel .grip-e { margin-top: 49px; }
.sel-col { display: flex; flex-direction: column; align-items: flex-end; width: 97px; margin-left: 14px; padding-top: 16px; }
.sel-col .blabel { font-size: 21px; }
.sel-gear { display: flex; align-items: center; justify-content: center; width: 46px; height: 46px; margin-top: 10px; border-radius: 2px; flex: none; }
.sel-boxes { display: flex; flex-direction: column; gap: 2px; margin: 16px 0 0 12px; }
.sel-box { position: relative; width: 330px; height: 38px; background: #333647; color: #fff; padding-left: 3px; }
.sel-t { font: 23px/41px "DejaVu Sans", sans-serif; letter-spacing: 5.700px; word-spacing: -6px; white-space: nowrap; }
.sel-caret { position: absolute; right: 4px; top: 14px; border-left: 8px solid transparent; border-right: 8px solid transparent; border-top: 10px solid #fff; }
.bg-speed { position: relative; display: flex; align-items: flex-start; flex: 1; height: 66px; border-bottom: 2px solid #dfe0e5; padding-left: 12px; }
.grip-s { margin: 16px 5px 0 0; }
.speed-btn { width: 54px; height: 54px; margin-top: 6px; flex: none; border-radius: 6px; }
.slider { position: relative; width: 275px; height: 60px; margin-left: 10px; flex: none; }
.sl-m, .sl-p { position: absolute; top: 6px; font: bold 20px/24px "Liberation Sans", sans-serif; color: #111; }
.sl-m { left: 1px; }
.sl-p { right: 3px; }
.sl-ticks { position: absolute; left: 0; right: 0; top: 30px; height: 9px; background: repeating-linear-gradient(to right, #c7ccd8 0 2px, transparent 2px 19px); }
.sl-track { position: absolute; left: 0; right: 0; top: 39px; height: 5px; background: #c9d5e4; }
.sl-knob { position: absolute; left: 80px; top: 29px; width: 24px; height: 24px; border: 2px solid #333; border-radius: 50%; background: #f8f8f9; }
.bsep-s { left: 385px; top: 2px; height: 62px; bottom: auto; width: 6px; }

.status { height: 48px; flex: none; background: #e7e7e9; border-top: 2px solid #bdbdc0; font: 21px/46px "DejaVu Sans", sans-serif; padding-left: 10px; color: #222; }
```
FILE: script.js
```js
// Draws each clip channel's waveform as an SVG shape from its amplitude envelope.
(function () {
  var NS = "http://www.w3.org/2000/svg";
  function rng(seed) {
    var s = seed * 2654435 + 12345;
    return function () {
      s = (s * 1664525 + 1013904223) % 4294967296;
      return s / 4294967296;
    };
  }
  function sample(amp, v, r) {
    if (v >= 0.8) {
      return r() > 0.82 ? amp * (0.55 + 0.6 * r()) : amp * (0.22 + 0.22 * r());
    }
    var n = 1 - v + v * r() * 1.3;
    if (v > 0 && r() > 0.93) n += v;
    return amp * n;
  }
  document.querySelectorAll(".wave").forEach(function (el) {
    var env = el.dataset.env.split(",").map(Number);
    var v = el.dataset.v === undefined ? 0.45 : Number(el.dataset.v);
    var blips = (el.dataset.blips || "").split(",").filter(Boolean).map(function (b) {
      var parts = b.split(":");
      return { pos: Number(parts[0]) / 100, amp: Number(parts[1]) };
    });
    var r = rng(Number(el.dataset.seed));
    var w = el.clientWidth;
    var c = el.classList.contains("wave2") ? 36 : 34;
    var top = [], bottom = [];
    for (var x = 0; x <= w; x += 2) {
      var p = (x / w) * (env.length - 1);
      var i = Math.min(Math.floor(p), env.length - 2);
      var a = env[i] + (env[i + 1] - env[i]) * (p - i);
      var up = Math.max(1.5, sample(a, v, r));
      var dn = Math.max(1.5, sample(a, v, r));
      blips.forEach(function (b) {
        var k = b.amp > 20 ? 2 : 4;
        var d = 1 - Math.abs(x - b.pos * w) / k;
        if (d > 0) {
          up = Math.max(up, b.amp * d);
          dn = Math.max(dn, b.amp * d);
        }
      });
      top.push(x + "," + (c - up).toFixed(1));
      bottom.unshift(x + "," + (c + dn).toFixed(1));
    }
    var svg = document.createElementNS(NS, "svg");
    svg.setAttribute("width", w);
    svg.setAttribute("height", el.clientHeight);
    var poly = document.createElementNS(NS, "polygon");
    poly.setAttribute("points", top.concat(bottom).join(" "));
    poly.setAttribute("fill", "#6264c8");
    poly.setAttribute("stroke", "#9a9ee6");
    poly.setAttribute("stroke-width", "1");
    poly.setAttribute("paint-order", "stroke");
    svg.appendChild(poly);
    el.appendChild(svg);
  });
})();
```
